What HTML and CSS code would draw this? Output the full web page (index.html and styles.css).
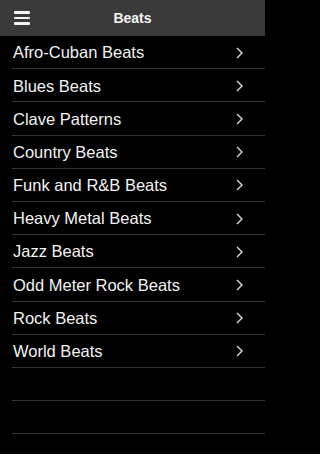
FILE: index.html
```html
<!DOCTYPE html>
<html>
<head>
<meta charset="utf-8">
<link rel="stylesheet" href="styles.css">
</head>
<body>
<div class="app">
  <header class="navbar">
    <span class="menu-btn" aria-label="Menu">
      <span class="bar"></span><span class="bar"></span><span class="bar"></span>
    </span>
    <h1 class="title">Beats</h1>
  </header>
  <ul class="list">
    <li class="row"><span class="label">Afro-Cuban Beats</span><svg class="chev" width="7" height="12" viewBox="0 0 7 12"><polyline points="1,1 6,6 1,11" fill="none" stroke="#dcdcdc" stroke-width="1.4"/></svg></li>
    <li class="row"><span class="label">Blues Beats</span><svg class="chev" width="7" height="12" viewBox="0 0 7 12"><polyline points="1,1 6,6 1,11" fill="none" stroke="#dcdcdc" stroke-width="1.4"/></svg></li>
    <li class="row"><span class="label">Clave Patterns</span><svg class="chev" width="7" height="12" viewBox="0 0 7 12"><polyline points="1,1 6,6 1,11" fill="none" stroke="#dcdcdc" stroke-width="1.4"/></svg></li>
    <li class="row"><span class="label">Country Beats</span><svg class="chev" width="7" height="12" viewBox="0 0 7 12"><polyline points="1,1 6,6 1,11" fill="none" stroke="#dcdcdc" stroke-width="1.4"/></svg></li>
    <li class="row"><span class="label">Funk and R&amp;B Beats</span><svg class="chev" width="7" height="12" viewBox="0 0 7 12"><polyline points="1,1 6,6 1,11" fill="none" stroke="#dcdcdc" stroke-width="1.4"/></svg></li>
    <li class="row"><span class="label">Heavy Metal Beats</span><svg class="chev" width="7" height="12" viewBox="0 0 7 12"><polyline points="1,1 6,6 1,11" fill="none" stroke="#dcdcdc" stroke-width="1.4"/></svg></li>
    <li class="row"><span class="label">Jazz Beats</span><svg class="chev" width="7" height="12" viewBox="0 0 7 12"><polyline points="1,1 6,6 1,11" fill="none" stroke="#dcdcdc" stroke-width="1.4"/></svg></li>
    <li class="row"><span class="label">Odd Meter Rock Beats</span><svg class="chev" width="7" height="12" viewBox="0 0 7 12"><polyline points="1,1 6,6 1,11" fill="none" stroke="#dcdcdc" stroke-width="1.4"/></svg></li>
    <li class="row"><span class="label">Rock Beats</span><svg class="chev" width="7" height="12" viewBox="0 0 7 12"><polyline points="1,1 6,6 1,11" fill="none" stroke="#dcdcdc" stroke-width="1.4"/></svg></li>
    <li class="row"><span class="label">World Beats</span><svg class="chev" width="7" height="12" viewBox="0 0 7 12"><polyline points="1,1 6,6 1,11" fill="none" stroke="#dcdcdc" stroke-width="1.4"/></svg></li>
    <li class="row empty"></li>
    <li class="row empty"></li>
    <li class="row empty"></li>
  </ul>
</div>
</body>
</html>
```

FILE: styles.css
```css
html, body {
  margin: 0;
  padding: 0;
  background: #000;
}
body {
  font-family: "Liberation Sans", Arial, sans-serif;
  color: #f2f2f2;
  width: 265px;
  height: 454px;
  overflow: hidden;
}
.navbar {
  height: 36px;
  background: #3a3a3a;
  display: flex;
  align-items: center;
  justify-content: center;
  position: relative;
}
.menu-btn {
  position: absolute;
  left: 14px;
  top: 11px;
  width: 16px;
  display: flex;
  flex-direction: column;
  gap: 3px;
}
.bar {
  display: block;
  height: 2.5px;
  background: #f4f4f4;
  border-radius: 1px;
}
.title {
  margin: 0;
  font-size: 14px;
  font-weight: bold;
  color: #f4f4f4;
}
.list {
  list-style: none;
  margin: 0;
  padding: 0 0 0 12px;
}
.row {
  box-sizing: border-box;
  height: 33.2px;
  border-bottom: 1px solid #343434;
  display: flex;
  align-items: center;
  justify-content: space-between;
  padding: 1px 22px 0 1px;
}
.label {
  font-size: 16.5px;
  line-height: 1;
}
.chev {
  display: block;
}
```
